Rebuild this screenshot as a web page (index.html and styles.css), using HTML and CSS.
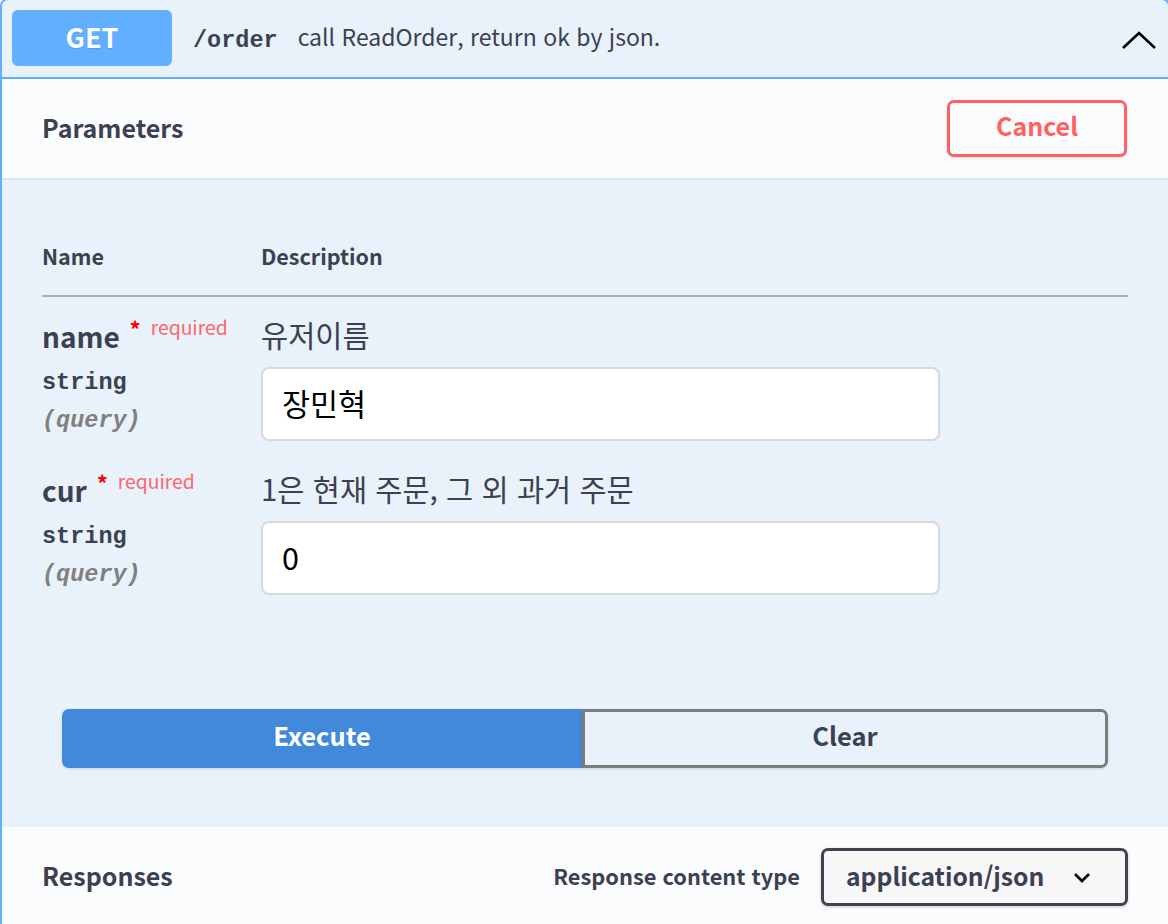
FILE: index.html
```html
<!DOCTYPE html>
<html lang="ko">
<head>
<meta charset="utf-8">
<title>GET /order</title>
<link rel="stylesheet" href="styles.css">
</head>
<body>
<div class="opblock">
  <div class="summary">
    <span class="method">GET</span>
    <span class="path">/order</span>
    <span class="summary-desc">call ReadOrder, return ok by json.</span>
    <svg class="arrow" width="36" height="20" viewBox="0 0 36 20"><polyline points="2,18 18,3 34,18" fill="none" stroke="#000" stroke-width="2.6"/></svg>
  </div>

  <div class="section-header">
    <h4 class="section-title">Parameters</h4>
    <button class="btn-cancel">Cancel</button>
  </div>

  <div class="params">
    <div class="param-row head">
      <div class="col-name">Name</div>
      <div class="col-desc">Description</div>
    </div>

    <div class="param-row">
      <div class="col-name">
        <div class="pname">name <span class="star">*</span><span class="req">required</span></div>
        <div class="ptype">string</div>
        <div class="pin">(query)</div>
      </div>
      <div class="col-desc">
        <div class="pdesc">유저이름</div>
        <div class="input">장민혁</div>
      </div>
    </div>

    <div class="param-row">
      <div class="col-name">
        <div class="pname">cur <span class="star">*</span><span class="req">required</span></div>
        <div class="ptype">string</div>
        <div class="pin">(query)</div>
      </div>
      <div class="col-desc">
        <div class="pdesc">1은 현재 주문, 그 외 과거 주문</div>
        <div class="input">0</div>
      </div>
    </div>
  </div>

  <div class="execute-wrapper">
    <button class="btn-execute">Execute</button>
    <button class="btn-clear">Clear</button>
  </div>

  <div class="responses-header">
    <h4 class="section-title">Responses</h4>
    <div class="content-type">
      <span class="ct-label">Response content type</span>
      <div class="select">
        <span>application/json</span>
        <svg width="18" height="11" viewBox="0 0 18 11"><polyline points="2,2 9,9 16,2" fill="none" stroke="#111" stroke-width="2.8"/></svg>
      </div>
    </div>
  </div>
</div>
</body>
</html>
```

FILE: styles.css
```css
* { box-sizing: border-box; }
html, body { margin: 0; padding: 0; overflow: hidden; }
body {
  background: #ffffff;
  font-family: "Noto Sans CJK KR", "Noto Sans", sans-serif;
  color: #3b4151;
}
.opblock {
  margin: -2px -2px 0 0;
  border: 2px solid #61affe;
  border-radius: 8px;
  background: #e9f1fb;
  min-height: 960px;
}
.summary {
  display: flex;
  align-items: center;
  height: 79px;
  padding: 0 10px 0 10px;
  border-bottom: 2px solid #61affe;
}
.method {
  width: 160px;
  height: 56px;
  margin-top: -1px;
  padding-bottom: 4px;
  display: flex;
  align-items: center;
  justify-content: center;
  background: #61affe;
  color: #fff;
  border-radius: 6px;
  font-weight: 700;
  font-size: 27px;
  text-shadow: 0 1px 0 rgba(0,0,0,.1);
}
.path {
  margin-left: 21px;
  font-family: "Liberation Mono", monospace;
  font-weight: 700;
  font-size: 23.5px;
  color: #3b4151;
  padding-top: 4px;
}
.summary-desc {
  margin-left: 20px;
  padding-bottom: 6px;
  font-size: 23px;
  color: #3b4151;
}
.arrow { margin-left: auto; margin-right: 1px; margin-top: 2px; }

.section-header {
  display: flex;
  align-items: center;
  justify-content: space-between;
  height: 99px;
  padding: 0 41px 0 40px;
  background: rgba(255,255,255,.8);
  box-shadow: 0 1px 2px rgba(0,0,0,.1);
}
.section-title {
  margin: 0;
  padding-bottom: 4px;
  font-size: 25px;
  font-weight: 700;
  color: #3b4151;
}
.btn-cancel {
  width: 180px;
  height: 57px;
  padding: 0 0 7px;
  border: 3px solid #ff6060;
  border-radius: 7px;
  background: transparent;
  color: #ff6060;
  font-family: inherit;
  font-weight: 700;
  font-size: 25px;
  box-shadow: 0 1px 3px rgba(0,0,0,.12);
}

.params { padding: 66px 40px 0 40px; }
.param-row {
  display: grid;
  grid-template-columns: 219px 1fr;
  padding: 22px 0 10px;
}
.param-row.head {
  padding: 0 0 27px;
  border-bottom: 2px solid #a9aeb8;
  font-size: 21.5px;
  font-weight: 700;
  line-height: 24px;
}
.pname {
  font-size: 28px;
  font-weight: 700;
  line-height: 34px;
  color: #3b4151;
}
.star {
  color: #ff0000;
  font-size: 22px;
  position: relative;
  top: -10px;
  margin-left: 2px;
}
.req {
  color: #ff6666;
  font-size: 19.3px;
  font-weight: 400;
  position: relative;
  top: -13px;
  margin-left: 10px;
}
.ptype {
  margin-top: 12px;
  font-family: "Liberation Mono", monospace;
  font-weight: 700;
  font-size: 23.5px;
  line-height: 28px;
  color: #3b4151;
}
.pin {
  margin-top: 10px;
  font-family: "Liberation Mono", monospace;
  font-weight: 700;
  font-style: italic;
  font-size: 23.5px;
  line-height: 28px;
  color: #808080;
}
.pdesc {
  font-size: 29.5px;
  line-height: 34px;
  margin-top: -2px;
  margin-bottom: 2px;
  color: #3b4151;
}
.input {
  margin-top: 16px;
  width: 679px;
  height: 74px;
  padding: 0 19px 2px;
  display: flex;
  align-items: center;
  background: #fff;
  border: 2px solid #d9d9d9;
  border-radius: 8px;
  font-size: 30.5px;
  color: #000;
}

.execute-wrapper {
  display: flex;
  padding: 104px 60px 59px 60px;
}
.btn-execute, .btn-clear {
  flex: 1;
  height: 59px;
  padding: 0 0 8px;
  font-family: inherit;
  font-weight: 700;
  font-size: 25.5px;
}
.btn-execute {
  background: #4289db;
  color: #fff;
  border: none;
  border-radius: 7px 0 0 7px;
  box-shadow: 0 1px 3px rgba(0,0,0,.12);
}
.btn-clear {
  background: transparent;
  color: #3b4151;
  border: 3px solid #7c7c7c;
  border-radius: 0 7px 7px 0;
  box-shadow: 0 1px 3px rgba(0,0,0,.12);
}

.responses-header {
  display: flex;
  align-items: center;
  justify-content: space-between;
  padding: 21px 40px 30px 40px;
  background: rgba(255,255,255,.8);
}
.content-type { display: flex; align-items: center; }
.ct-label {
  font-size: 21.8px;
  font-weight: 700;
  color: #3b4151;
  margin-right: 21px;
  padding-bottom: 4px;
}
.select {
  width: 307px;
  height: 58px;
  display: flex;
  align-items: center;
  justify-content: space-between;
  padding: 0 34px 5px 22px;
  background: #f7f7f7;
  border: 3px solid #41444e;
  border-radius: 7px;
  box-shadow: 0 1px 3px rgba(0,0,0,.2);
  font-size: 24.7px;
  font-weight: 700;
  color: #3b4151;
}
.select svg { margin-top: 5px; }
```
